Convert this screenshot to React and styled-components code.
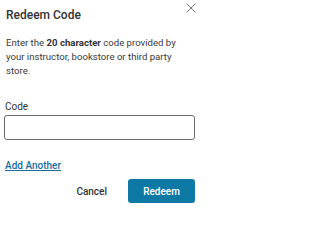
import React from "react";
import styled, { createGlobalStyle } from "styled-components";

const GlobalStyle = createGlobalStyle`
  html, body {
    margin: 0;
    padding: 0;
    background: #ffffff;
  }
  body {
    font-family: Roboto, "Liberation Sans", sans-serif;
    color: #333333;
  }
`;

const Dialog = styled.div`
  width: 203px;
  height: 205px;
  box-sizing: border-box;
  padding: 0 8px 0 4px;
  display: flex;
  flex-direction: column;
`;

const Header = styled.div`
  display: flex;
  justify-content: space-between;
  align-items: flex-start;
`;

const Title = styled.h2`
  margin: 7px 0 0 2px;
  font-size: 12px;
  line-height: 16px;
  font-weight: 500;
  color: #333333;
`;

const CloseButton = styled.button`
  border: none;
  background: none;
  padding: 0;
  margin: 2px -2px 0 0;
  width: 12px;
  height: 12px;
  display: flex;
  cursor: pointer;
`;

const Intro = styled.p`
  margin: 13px 0 0 2px;
  font-size: 9.6px;
  line-height: 14px;
  color: #3a3a3a;

  b {
    font-weight: 700;
    color: #333333;
  }
`;

const Label = styled.label`
  margin: 22px 0 0 1px;
  font-size: 10px;
  line-height: 13px;
  color: #333333;
`;

const Input = styled.input`
  margin-top: 2px;
  height: 25px;
  box-sizing: border-box;
  border: 1px solid #6b6b6b;
  border-radius: 3px;
  outline: none;
  font-size: 11px;
  padding: 0 6px;
`;

const AddLink = styled.a`
  margin: 19px 0 0 1px;
  font-size: 10px;
  font-weight: 500;
  line-height: 13px;
  color: #1a6d9c;
  text-decoration: underline;
  cursor: pointer;
  align-self: flex-start;
`;

const Actions = styled.div`
  margin-top: 7px;
  display: flex;
  justify-content: flex-end;
  align-items: center;
  gap: 17px;
`;

const Button = styled.button`
  height: 24px;
  border-radius: 3px;
  font-family: Roboto, "Liberation Sans", sans-serif;
  font-size: 10px;
  font-weight: 500;
  cursor: pointer;
  border: none;
  padding: 0 ${(p) => (p.$primary ? "0" : "4px")};
  width: ${(p) => (p.$primary ? "67px" : "auto")};
  background: ${(p) => (p.$primary ? "#0f79a6" : "transparent")};
  color: ${(p) => (p.$primary ? "#ffffff" : "#333333")};
`;

export default function App() {
  return (
    <>
      <GlobalStyle />
      <Dialog>
        <Header>
          <Title>Redeem Code</Title>
          <CloseButton aria-label="Close">
            <svg width="12" height="12" viewBox="0 0 12 12">
              <path d="M1.5 1.5 L10.5 10.5 M10.5 1.5 L1.5 10.5" stroke="#7a7a7a" strokeWidth="1" fill="none" />
            </svg>
          </CloseButton>
        </Header>
        <Intro>
          Enter the <b>20 character</b> code provided by your instructor, bookstore or third party store.
        </Intro>
        <Label htmlFor="code">Code</Label>
        <Input id="code" />
        <AddLink>Add Another</AddLink>
        <Actions>
          <Button>Cancel</Button>
          <Button $primary>Redeem</Button>
        </Actions>
      </Dialog>
    </>
  );
}
